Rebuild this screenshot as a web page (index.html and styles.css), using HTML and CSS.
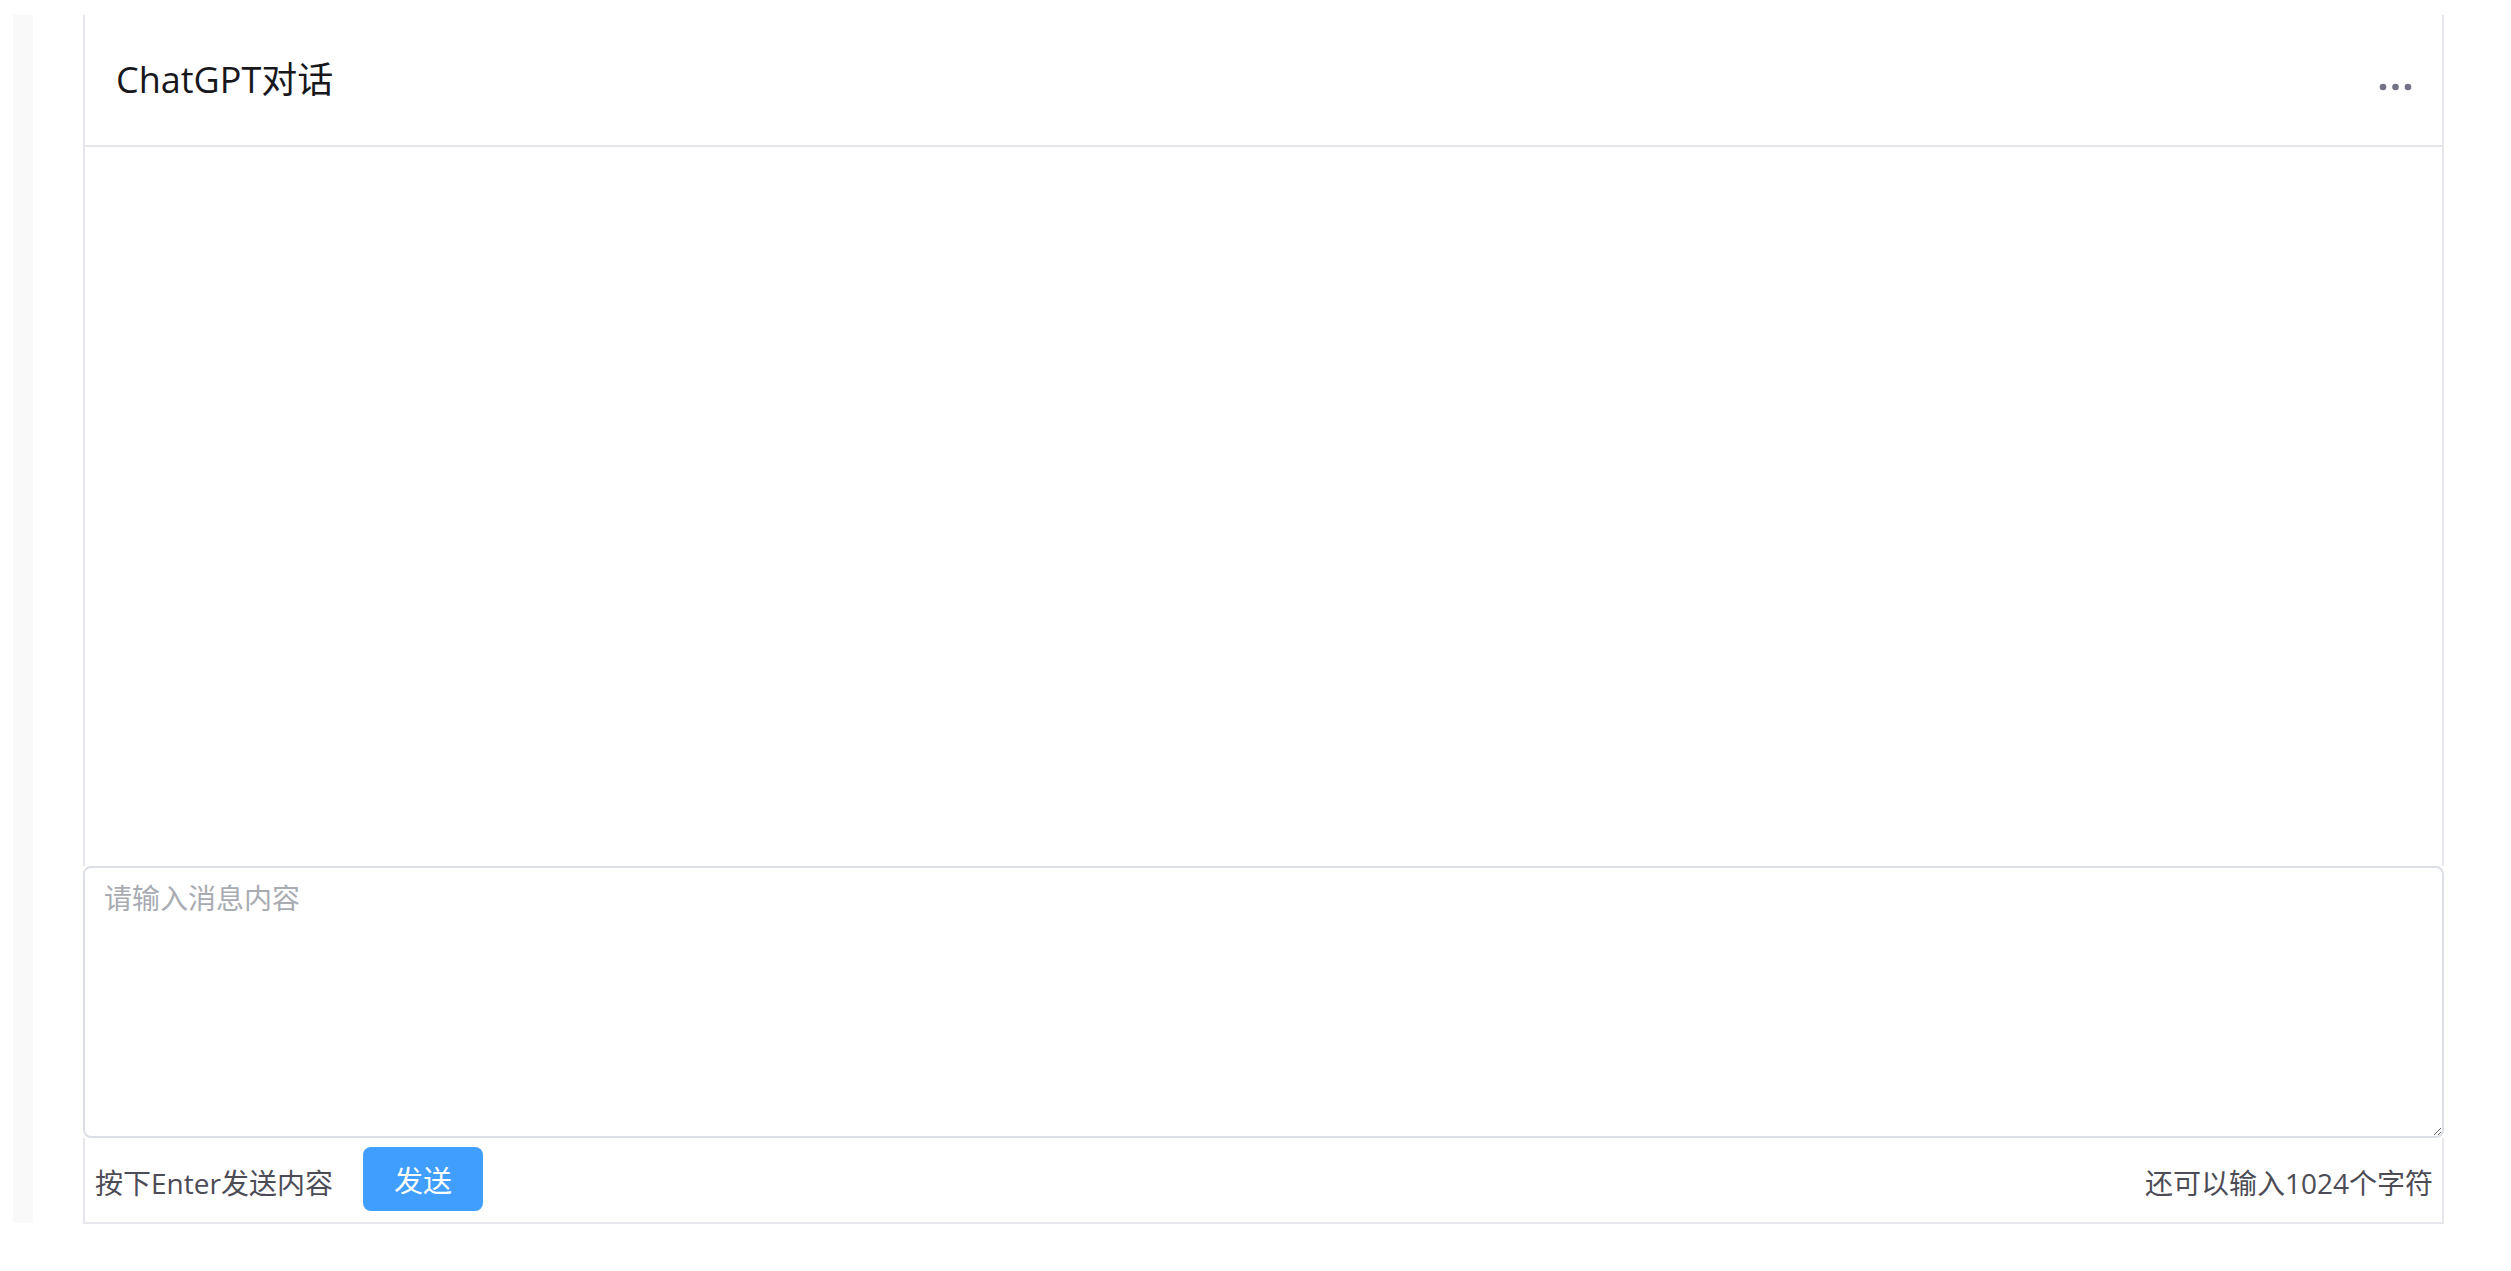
FILE: index.html
```html
<!DOCTYPE html>
<html lang="zh-CN">
<head>
<meta charset="utf-8">
<title>ChatGPT对话</title>
<link rel="stylesheet" href="styles.css">
</head>
<body>
<div class="app">
  <aside class="sidebar"></aside>
  <main class="chat">
    <header class="chat-header">
      <h1 class="chat-title">ChatGPT对话</h1>
      <button class="more" aria-label="更多">
        <svg width="34" height="8" viewBox="0 0 34 8"><circle cx="4" cy="4" r="3.3" fill="#737386"/><circle cx="16.5" cy="4" r="3.3" fill="#737386"/><circle cx="29" cy="4" r="3.3" fill="#737386"/></svg>
      </button>
    </header>
    <section class="messages"></section>
    <textarea class="input" placeholder="请输入消息内容"></textarea>
    <footer class="chat-footer">
      <div class="footer-left">
        <span class="hint">按下Enter发送内容</span>
        <button class="send">发送</button>
      </div>
      <span class="count">还可以输入1024个字符</span>
    </footer>
  </main>
</div>
</body>
</html>
```

FILE: styles.css
```css
html, body {
  margin: 0;
  padding: 0;
  background: #ffffff;
}
body {
  font-family: "Open Sans", "Noto Sans CJK SC", sans-serif;
}
.app {
  display: flex;
  align-items: flex-start;
  padding-top: 15px;
}
.sidebar {
  margin-left: 13px;
  width: 20px;
  height: 1208px;
  background: #f9f9f9;
  flex: none;
}
.chat {
  margin-left: 50px;
  width: 2361px;
  display: flex;
  flex-direction: column;
  flex: none;
}
.chat-header {
  height: 130px;
  border-left: 2px solid #e6e6ec;
  border-right: 2px solid #e6e6ec;
  border-bottom: 2px solid #e6e6ec;
  display: flex;
  align-items: center;
  justify-content: space-between;
  padding: 0 29px 0 31px;
}
.chat-title {
  margin: 0;
  font-size: 36px;
  font-weight: 400;
  color: #18181c;
  line-height: 1;
}
.more {
  border: 0;
  background: none;
  padding: 0;
  margin-top: 14px;
  display: flex;
}
.messages {
  height: 719px;
  border-left: 2px solid #e6e6ec;
  border-right: 2px solid #e6e6ec;
}
.input {
  display: block;
  box-sizing: border-box;
  width: 100%;
  height: 272px;
  margin: 0;
  border: 2px solid #dcdfe6;
  border-radius: 8px;
  padding: 9px 19px;
  font-family: "Open Sans", "Noto Sans CJK SC", sans-serif;
  font-size: 28px;
  line-height: 1.5;
  color: #606266;
  resize: vertical;
  outline: none;
}
.input::placeholder {
  color: #a8abb2;
}
.chat-footer {
  height: 84px;
  border-left: 2px solid #e6e6ec;
  border-right: 2px solid #e6e6ec;
  border-bottom: 2px solid #e6e6ec;
  display: flex;
  align-items: center;
  justify-content: space-between;
  padding: 0 9px 0 10px;
}
.footer-left {
  display: flex;
  align-items: center;
  gap: 30px;
}
.hint, .count {
  font-size: 28px;
  color: #4c4c56;
  margin-top: 3px;
}
.send {
  width: 120px;
  height: 64px;
  border: 0;
  border-radius: 8px;
  background: #409eff;
  color: #ffffff;
  font-family: "Open Sans", "Noto Sans CJK SC", sans-serif;
  font-size: 29px;
  padding: 0;
  margin-top: -2px;
}
```
